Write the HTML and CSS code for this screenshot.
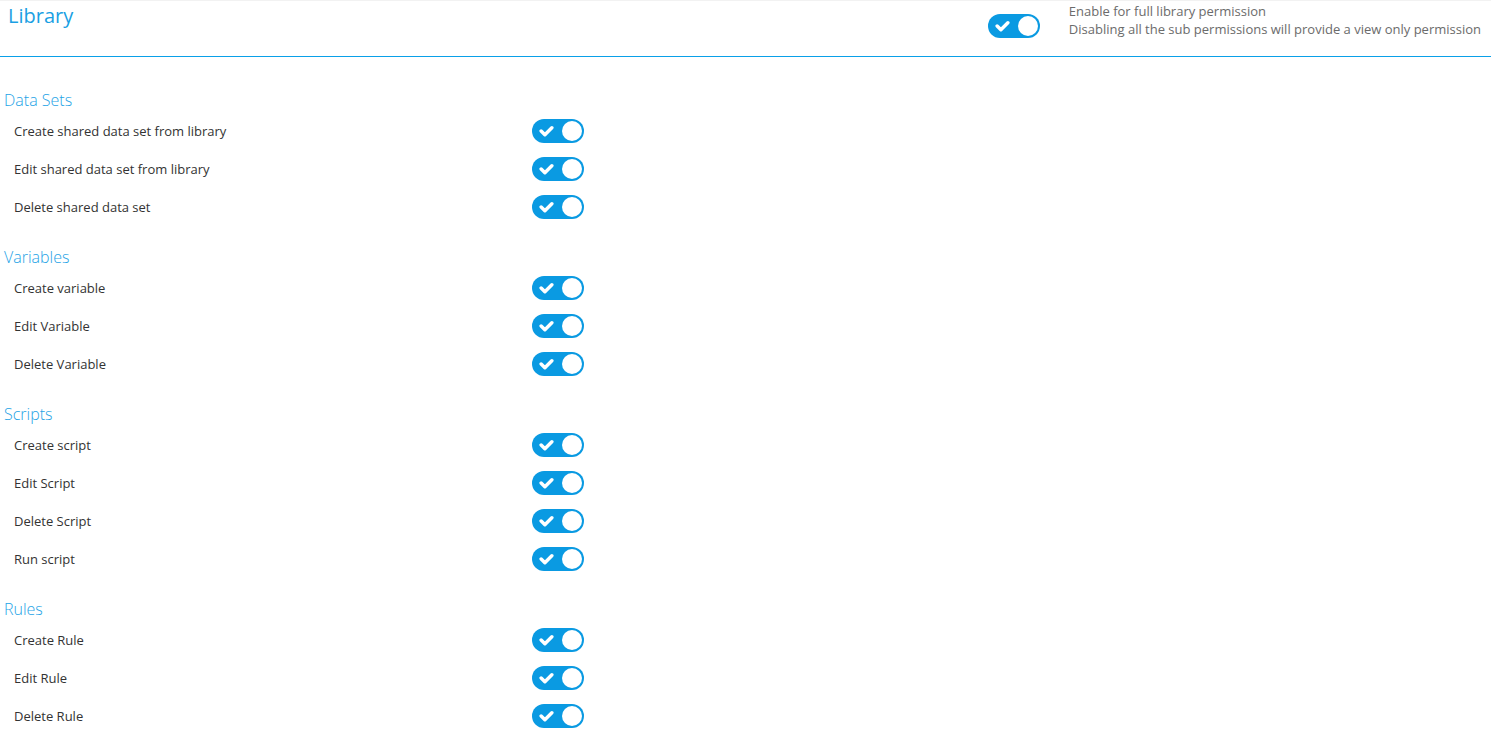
FILE: index.html
```html
<!DOCTYPE html>
<html lang="en">
<head>
    <meta charset="UTF-8">
    <meta name="viewport" content="width=device-width, initial-scale=1.0">
    <title>Library Permissions</title>
    <link rel="stylesheet" href="styles.css">
</head>
<body>
    <div class="header">
        <h1>Library</h1>
        <div class="header-right">
            <span class="switch">
                <svg class="tick" viewBox="0 0 14 11"><path d="M2 5.5 L5.5 9 L12 2.5"/></svg>
                <span class="knob"></span>
            </span>
            <div class="header-text">
                <p>Enable for full library permission</p>
                <p>Disabling all the sub permissions will provide a view only permission</p>
            </div>
        </div>
    </div>

    <div class="section">
        <h2>Data Sets</h2>
        <div class="row"><span class="label">Create shared data set from library</span><span class="switch"><svg class="tick" viewBox="0 0 14 11"><path d="M2 5.5 L5.5 9 L12 2.5"/></svg><span class="knob"></span></span></div>
        <div class="row"><span class="label">Edit shared data set from library</span><span class="switch"><svg class="tick" viewBox="0 0 14 11"><path d="M2 5.5 L5.5 9 L12 2.5"/></svg><span class="knob"></span></span></div>
        <div class="row"><span class="label">Delete shared data set</span><span class="switch"><svg class="tick" viewBox="0 0 14 11"><path d="M2 5.5 L5.5 9 L12 2.5"/></svg><span class="knob"></span></span></div>
    </div>

    <div class="section">
        <h2>Variables</h2>
        <div class="row"><span class="label">Create variable</span><span class="switch"><svg class="tick" viewBox="0 0 14 11"><path d="M2 5.5 L5.5 9 L12 2.5"/></svg><span class="knob"></span></span></div>
        <div class="row"><span class="label">Edit Variable</span><span class="switch"><svg class="tick" viewBox="0 0 14 11"><path d="M2 5.5 L5.5 9 L12 2.5"/></svg><span class="knob"></span></span></div>
        <div class="row"><span class="label">Delete Variable</span><span class="switch"><svg class="tick" viewBox="0 0 14 11"><path d="M2 5.5 L5.5 9 L12 2.5"/></svg><span class="knob"></span></span></div>
    </div>

    <div class="section">
        <h2>Scripts</h2>
        <div class="row"><span class="label">Create script</span><span class="switch"><svg class="tick" viewBox="0 0 14 11"><path d="M2 5.5 L5.5 9 L12 2.5"/></svg><span class="knob"></span></span></div>
        <div class="row"><span class="label">Edit Script</span><span class="switch"><svg class="tick" viewBox="0 0 14 11"><path d="M2 5.5 L5.5 9 L12 2.5"/></svg><span class="knob"></span></span></div>
        <div class="row"><span class="label">Delete Script</span><span class="switch"><svg class="tick" viewBox="0 0 14 11"><path d="M2 5.5 L5.5 9 L12 2.5"/></svg><span class="knob"></span></span></div>
        <div class="row"><span class="label">Run script</span><span class="switch"><svg class="tick" viewBox="0 0 14 11"><path d="M2 5.5 L5.5 9 L12 2.5"/></svg><span class="knob"></span></span></div>
    </div>

    <div class="section">
        <h2>Rules</h2>
        <div class="row"><span class="label">Create Rule</span><span class="switch"><svg class="tick" viewBox="0 0 14 11"><path d="M2 5.5 L5.5 9 L12 2.5"/></svg><span class="knob"></span></span></div>
        <div class="row"><span class="label">Edit Rule</span><span class="switch"><svg class="tick" viewBox="0 0 14 11"><path d="M2 5.5 L5.5 9 L12 2.5"/></svg><span class="knob"></span></span></div>
        <div class="row"><span class="label">Delete Rule</span><span class="switch"><svg class="tick" viewBox="0 0 14 11"><path d="M2 5.5 L5.5 9 L12 2.5"/></svg><span class="knob"></span></span></div>
    </div>
</body>
</html>
```

FILE: styles.css
```css
body {
    font-family: 'Open Sans', 'Liberation Sans', sans-serif;
    margin: 0;
    padding: 0;
    background: #fff;
    color: #333;
}

h1, h2, p {
    margin: 0;
    font-weight: 400;
}

.header {
    display: flex;
    justify-content: space-between;
    align-items: flex-start;
    height: 54px;
    padding: 1px 10px 0 8px;
    border-top: 1px solid #f2f2f2;
    border-bottom: 1px solid #0aa0e8;
}

.header h1 {
    font-size: 20px;
    line-height: 28px;
    color: #1a9fe3;
}

.header-right {
    display: flex;
    align-items: flex-start;
    gap: 29px;
}

.header-right .switch {
    margin-top: 12px;
}

.header-text p {
    font-size: 13px;
    line-height: 18px;
    color: #6b6b6b;
}

.section {
    margin-top: 19px;
}

.header + .section {
    margin-top: 31px;
}

.section h2 {
    font-size: 16px;
    line-height: 24px;
    font-weight: 300;
    padding-left: 4px;
    color: #1ea3e6;
}

.row {
    display: flex;
    align-items: center;
    height: 38px;
    padding-left: 14px;
}

.label {
    width: 518px;
    font-size: 13px;
    color: #333;
}

.switch {
    position: relative;
    display: inline-block;
    width: 52px;
    height: 24px;
    border-radius: 12px;
    background: #0a9ae2;
    flex-shrink: 0;
}

.switch .tick {
    position: absolute;
    left: 7px;
    top: 6px;
    width: 15px;
    height: 12px;
}

.switch .tick path {
    fill: none;
    stroke: #fff;
    stroke-width: 3.2;
    stroke-linecap: round;
    stroke-linejoin: round;
}

.switch .knob {
    position: absolute;
    right: 2px;
    top: 2px;
    width: 20px;
    height: 20px;
    border-radius: 50%;
    background: #fff;
}
```
